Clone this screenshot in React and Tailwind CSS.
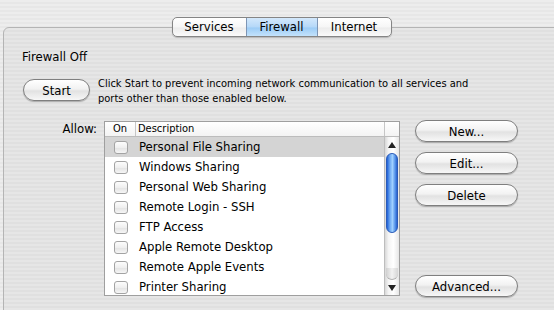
const rows = [
  "Personal File Sharing",
  "Windows Sharing",
  "Personal Web Sharing",
  "Remote Login - SSH",
  "FTP Access",
  "Apple Remote Desktop",
  "Remote Apple Events",
  "Printer Sharing",
];

const AquaButton = ({ children, className = "" }) => (
  <button
    className={
      "h-[22px] rounded-full border border-[#7f7f7f] bg-[linear-gradient(180deg,#ffffff_0%,#f2f2f2_45%,#e2e2e2_55%,#f7f7f7_100%)] shadow-[0_1px_1px_rgba(0,0,0,0.25)] text-[13px] leading-none text-black flex items-center justify-center " +
      className
    }
  >
    {children}
  </button>
);

const Checkbox = () => (
  <div className="w-[14px] h-[13px] rounded-[3px] border border-[#a3a3a3] bg-[linear-gradient(180deg,#fdfdfd_0%,#efefef_50%,#e4e4e4_55%,#f6f6f6_100%)]" />
);

const Scrollbar = () => (
  <div className="w-[15px] h-full border-l border-[#bdbdbd] bg-[linear-gradient(90deg,#d8d8d8_0%,#f4f4f4_25%,#ffffff_60%,#e6e6e6_100%)] flex flex-col items-center">
    <div className="h-[15px] flex items-center justify-center">
      <div className="w-0 h-0 border-l-[4px] border-r-[4px] border-b-[6px] border-l-transparent border-r-transparent border-b-[#222]" />
    </div>
    <div className="mt-[1px] w-[12px] h-[80px] rounded-full border border-[#2a5bb8] bg-[linear-gradient(90deg,#1f5fd6_0%,#6faaf2_30%,#9fd0ff_55%,#4b8ae6_85%,#2a60c8_100%)]" />
    <div className="flex-1" />
    <div className="w-[12px] h-[12px] rounded-b-full bg-[linear-gradient(90deg,#cfcfcf_0%,#f2f2f2_50%,#d6d6d6_100%)] border-b border-[#b0b0b0]" />
    <div className="h-[15px] flex items-center justify-center">
      <div className="w-0 h-0 border-l-[4px] border-r-[4px] border-t-[6px] border-l-transparent border-r-transparent border-t-[#222]" />
    </div>
  </div>
);

export default function App() {
  return (
    <div className="w-[554px] h-[310px] overflow-hidden font-['DejaVu_Sans_Condensed','DejaVu_Sans',sans-serif] text-[11px] text-black bg-[repeating-linear-gradient(180deg,#ededed_0px,#ededed_2px,#e7e7e7_2px,#e7e7e7_4px)]">
      <div className="pt-[17px] ml-[3px] mr-[-6px]">
        <div className="relative z-10 flex justify-center">
          <div className="flex h-[20px] rounded-[5px] border border-[#858585] bg-[linear-gradient(180deg,#ffffff_0%,#f6f6f6_50%,#ececec_55%,#fafafa_100%)] shadow-[0_1px_1px_rgba(0,0,0,0.2)] overflow-hidden text-[13px]">
            <div className="w-[73px] flex items-center justify-center">Services</div>
            <div className="w-[72px] flex items-center justify-center border-l border-r border-[#7d95b5] bg-[linear-gradient(180deg,#d3e8fc_0%,#b5d8f8_50%,#9cccf6_55%,#c3e2fb_100%)]">
              Firewall
            </div>
            <div className="w-[73px] flex items-center justify-center">Internet</div>
          </div>
        </div>
        <div className="-mt-[10px] h-[300px] rounded-[6px] border border-[#b4b4b4] bg-[repeating-linear-gradient(180deg,#e6e6e6_0px,#e6e6e6_2px,#e0e0e0_2px,#e0e0e0_4px)] pl-[18px] pt-[21px]">
          <div className="leading-[16px] text-[13px]">Firewall Off</div>
          <div className="mt-[11px] flex items-start">
            <AquaButton className="mt-[3px] ml-[1px] w-[67px]">Start</AquaButton>
            <p className="ml-[8px] leading-[15px] text-[11px]">
              Click Start to prevent incoming network communication to all services and
              <br />
              ports other than those enabled below.
            </p>
          </div>
          <div className="mt-[15px] flex items-start">
            <div className="w-[75px] text-right leading-[15px] text-[13px]">Allow:</div>
            <div className="ml-[7px] w-[296px] h-[175px] border border-[#9f9f9f] bg-white flex flex-col overflow-hidden">
              <div className="flex h-[15px] shrink-0 border-b border-[#bcbcbc] bg-[linear-gradient(180deg,#ffffff_0%,#f3f3f3_100%)] leading-[14px] text-[11px]">
                <div className="w-[31px] text-center border-r border-[#c6c6c6]">On</div>
                <div className="flex-1 pl-[2px]">Description</div>
                <div className="w-[15px] border-l border-[#c6c6c6]" />
              </div>
              <div className="flex flex-1 min-h-0">
                <div className="flex-1 overflow-hidden">
                  {rows.map((r, i) => (
                    <div
                      key={r}
                      className={"flex items-center h-[20px] " + (i === 0 ? "bg-[#d4d4d4]" : "")}
                    >
                      <div className="w-[31px] flex justify-center pl-[1px]">
                        <Checkbox />
                      </div>
                      <div className="pl-[3px] text-[13px]">{r}</div>
                    </div>
                  ))}
                </div>
                <Scrollbar />
              </div>
            </div>
            <div className="ml-[15px] -mt-[1px] w-[103px] h-[177px] flex flex-col gap-[10px]">
              <AquaButton className="w-full">New...</AquaButton>
              <AquaButton className="w-full">Edit...</AquaButton>
              <AquaButton className="w-full">Delete</AquaButton>
              <AquaButton className="w-full mt-auto">Advanced...</AquaButton>
            </div>
          </div>
        </div>
      </div>
    </div>
  );
}
